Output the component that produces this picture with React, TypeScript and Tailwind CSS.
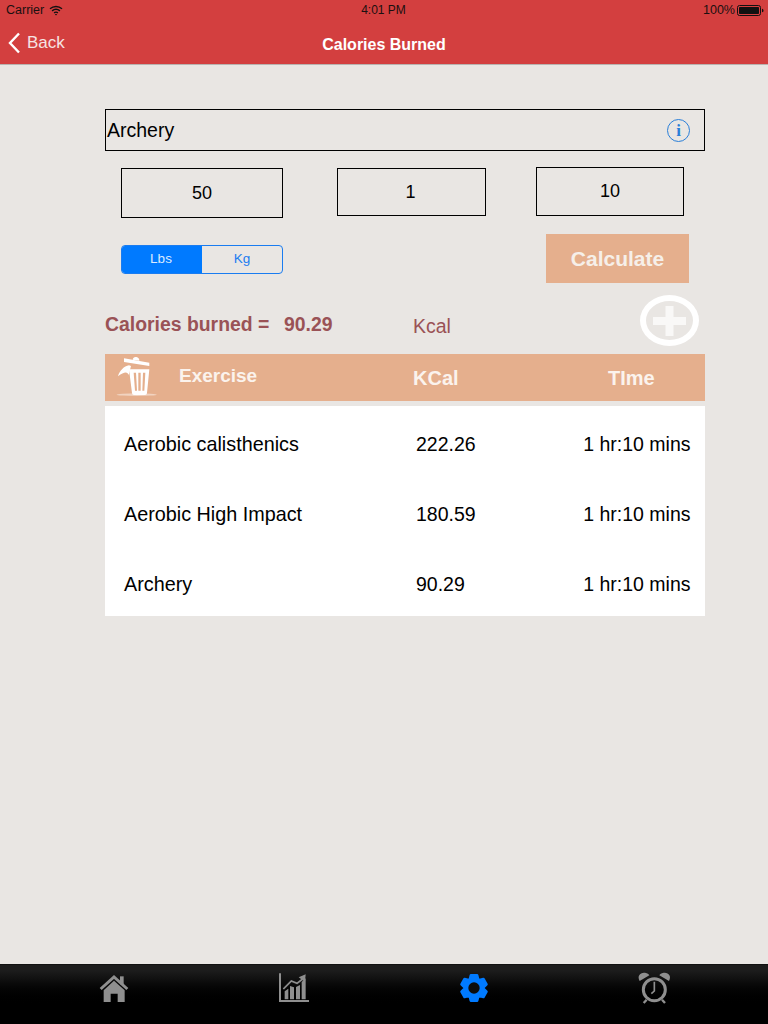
import React from "react";

const rows = [
  ["Aerobic calisthenics", "222.26", "1 hr:10 mins"],
  ["Aerobic High Impact", "180.59", "1 hr:10 mins"],
  ["Archery", "90.29", "1 hr:10 mins"],
];

function Wifi() {
  return (
    <svg width="14" height="11" viewBox="0 0 14 11" fill="none" stroke="#111" strokeWidth="1.4">
      <path d="M1 3.8C4.5.7 9.5.7 13 3.8" />
      <path d="M3.1 5.9c2.3-2 5.5-2 7.8 0" />
      <path d="M5.1 7.9c1.1-.9 2.7-.9 3.8 0" />
      <path d="M7 10.6 5.9 9.2c.7-.4 1.5-.4 2.2 0z" fill="#111" stroke="none" />
    </svg>
  );
}

function Battery() {
  return (
    <svg width="27" height="11" viewBox="0 0 27 11">
      <rect x=".5" y=".5" width="23" height="10" rx="2" fill="none" stroke="#111" />
      <rect x="2" y="2" width="20" height="7" rx=".8" fill="#111" />
      <path d="M25 3.7c1 .2 1.5.9 1.5 1.8s-.5 1.6-1.5 1.8z" fill="#111" />
    </svg>
  );
}

function Trash() {
  return (
    <svg width="60" height="47" viewBox="0 0 180 141" className="block">
      <ellipse cx="80" cy="122" rx="60" ry="4" fill="#fff" opacity=".45" />
      <path d="M42 13 118 26 118 36 42 24z" fill="#fff" />
      <path d="M68 17c1-6 5-9 11-8 6 1 9 5 9 11z" fill="#fff" />
      <path d="M57 46H118L111 117c-.5 4-2.500 6-6 6H72c-3.500 0-5.500-2-6-6z" fill="#fff" />
      <path d="M71 56h7l3 54h-6zM85 56h7v54h-7zM99 56h7l-3 54h-6z" fill="#e5af8d" />
      <path d="M24 67C29 49 42 37 57 34l6 2-7 27C53 53 43 52 24 67z" fill="#fff" />
    </svg>
  );
}

function HomeIcon() {
  return (
    <svg width="60" height="45" viewBox="0 0 180 135" className="block">
      <path d="M90 34h11v24H90z" fill="#8f8f8f" />
      <path d="M32 72 72 36l40 36" fill="none" stroke="#8f8f8f" strokeWidth="9" />
      <path d="M41 76 72 47l32 29v35H83V86H62v25H41z" fill="#8f8f8f" />
    </svg>
  );
}

function ChartIcon() {
  return (
    <svg width="50" height="45" viewBox="0 0 150 135" className="block" fill="#8f8f8f">
      <path d="M27 25h6v80h84v6H27z" />
      <path d="M44 103V79l11-8v32zM60 103V63l12 4v36zM78 103V66l12-6v43zM95 103V50l12-10v63z" />
      <path d="M40 72 64 48l17 7 17-13" fill="none" stroke="#141414" strokeWidth="9" />
      <path d="M40 72 64 48l17 7 17-13" fill="none" stroke="#8f8f8f" strokeWidth="5" />
      <path d="m86 37 21-9-2 23z" />
    </svg>
  );
}

function GearIcon() {
  const cx = 72;
  const cy = 69;
  const pts: string[] = [];
  for (let i = 0; i < 6; i++) {
    const a = (i * Math.PI) / 3 - Math.PI / 2;
    const offsets: [number, number][] = [
      [-0.5, 27],
      [-0.24, 39],
      [0.24, 39],
      [0.5, 27],
    ];
    for (const [o, r] of offsets) {
      pts.push(`${(cx + r * Math.cos(a + o)).toFixed(1)},${(cy + r * Math.sin(a + o)).toFixed(1)}`);
    }
  }
  return (
    <svg width="50" height="45" viewBox="0 0 150 135" className="block">
      <polygon points={pts.join(" ")} fill="#007aff" stroke="#007aff" strokeWidth="8" strokeLinejoin="round" />
      <circle cx={cx} cy={cy} r="17" fill="#0c0c0c" />
    </svg>
  );
}

function AlarmIcon() {
  return (
    <svg width="50" height="45" viewBox="0 0 150 135" className="block" fill="#8f8f8f">
      <circle cx="73" cy="74" r="33" fill="none" stroke="#8f8f8f" strokeWidth="9" />
      <path d="M29 48C20 32 32 20 48 24c6 2 9 4 10 7zM117 48c9-16-3-28-19-24-6 2-9 4-10 7z" />
      <path d="M73 50v28l-9 8" fill="none" stroke="#8f8f8f" strokeWidth="5" />
      <path d="m50 104-9 10M96 104l9 10" fill="none" stroke="#8f8f8f" strokeWidth="7" />
    </svg>
  );
}

export default function App() {
  return (
    <div className="flex h-[1024px] w-[768px] flex-col overflow-hidden bg-[#e9e6e3] font-['Liberation_Sans',Arial,sans-serif] text-black">
      <header className="h-[65px] border-b border-[#b9b3b0] bg-[#d33f3f]">
        <div className="grid h-5 grid-cols-3 items-center pl-[6px] pr-[4px] text-[12.500px] text-[#1a1010]">
          <div className="flex items-center gap-[5px]">
            <span>Carrier</span>
            <Wifi />
          </div>
          <div className="pr-[3px] text-center text-[12px]">4:01 PM</div>
          <div className="flex items-center justify-end gap-[2px]">
            <span>100%</span>
            <Battery />
          </div>
        </div>
        <div className="relative flex h-11 items-center justify-center pt-[6px]">
          <div className="absolute left-[7px] top-[10px] flex items-center gap-[6px] text-[17px] text-[#f6e3e3]">
            <svg width="14" height="22" viewBox="0 0 14 22" fill="none" stroke="#fff" strokeWidth="2.400">
              <path d="M12 1.500 3 11l9 9.500" />
            </svg>
            <span>Back</span>
          </div>
          <h1 className="text-[16px] font-bold text-white">Calories Burned</h1>
        </div>
      </header>

      <main className="flex-1 pl-[105px] pt-[44px]">
        <div className="flex h-[42px] w-[600px] items-center justify-between border border-black pl-[1px] pr-[14px] text-[19.500px]">
          <span className="pt-[2px]">Archery</span>
          <span className="flex h-[23px] w-[23px] items-center justify-center rounded-full border border-[#2a7fd8] font-['Liberation_Serif',serif] text-[17px] font-bold leading-none text-[#2a7fd8]">
            i
          </span>
        </div>

        <div className="ml-[16px] mt-[16px] flex h-[50px] items-start text-[18px]">
          <div className="mt-px flex h-[50px] w-[162px] items-center justify-center border border-black">50</div>
          <div className="ml-[54px] mt-px flex h-[48px] w-[149px] items-center justify-center border border-black pr-[2px]">1</div>
          <div className="ml-[50px] flex h-[49px] w-[148px] items-center justify-center border border-black">10</div>
        </div>

        <div className="ml-[16px] mt-[17px] flex h-[49px] items-start">
          <div className="mt-[11px] flex h-[29px] w-[162px] overflow-hidden rounded-[4px] border border-[#1a7cf0] text-[13.500px]">
            <div className="flex w-[80px] items-center justify-center bg-[#007aff] pb-[1px] pr-[2px] text-[#dcebff]">Lbs</div>
            <div className="flex flex-1 items-center justify-center text-[#1a7cf0]">Kg</div>
          </div>
          <div className="ml-[263px] flex h-[49px] w-[143px] items-center justify-center bg-[#e5af8d] text-[21px] font-bold text-[#f6efe9]">
            Calculate
          </div>
        </div>

        <div className="relative mt-[12px] flex h-[51px] w-[600px] items-start pt-[18px] text-[#9a5256]">
          <span className="w-[179px] text-[19.400px] font-bold leading-[22px]">Calories burned =</span>
          <span className="w-[129px] text-[19.400px] font-bold leading-[22px]">90.29</span>
          <span className="mt-[2px] text-[19.500px] leading-[22px]">Kcal</span>
          <div className="absolute left-[535px] top-0 flex h-[51px] w-[59px] items-center justify-center rounded-[50%] border-[6px] border-white">
            <svg width="33" height="30" viewBox="0 0 33 30" fill="#f9f8f7"><path d="M12.500 0h8v11H33v8H20.500v11h-8V19H0v-8h12.500z" /></svg>
          </div>
        </div>

        <div className="mt-[8px] flex h-[47px] w-[600px] items-center bg-[#e5af8d] text-[20px] font-bold text-[#fbf3ed]">
          <div className="ml-[5px] w-[69px]"><Trash /></div>
          <span className="mb-[3px] w-[234px] text-[19px]">Exercise</span>
          <span className="w-[195px]">KCal</span>
          <span>TIme</span>
        </div>

        <div className="mt-[5px] w-[600px] bg-white text-[19.800px]">
          {rows.map((r) => (
            <div key={r[0]} className="flex h-[70px] items-center pt-[8px]">
              <span className="ml-[19px] w-[292px]">{r[0]}</span>
              <span className="w-[120px] text-[19.500px]">{r[1]}</span>
              <span className="w-[154.500px] text-right text-[19.500px]">{r[2]}</span>
            </div>
          ))}
        </div>
      </main>

      <footer className="grid h-[60px] grid-cols-4 border-t border-[#111] bg-gradient-to-b from-[#1c1c1c] from-10% to-black to-70%">
        <div className="ml-[90px]"><HomeIcon /></div>
        <div className="ml-[78px]"><ChartIcon /></div>
        <div className="ml-[66px]"><GearIcon /></div>
        <div className="ml-[54px]"><AlarmIcon /></div>
      </footer>
    </div>
  );
}
